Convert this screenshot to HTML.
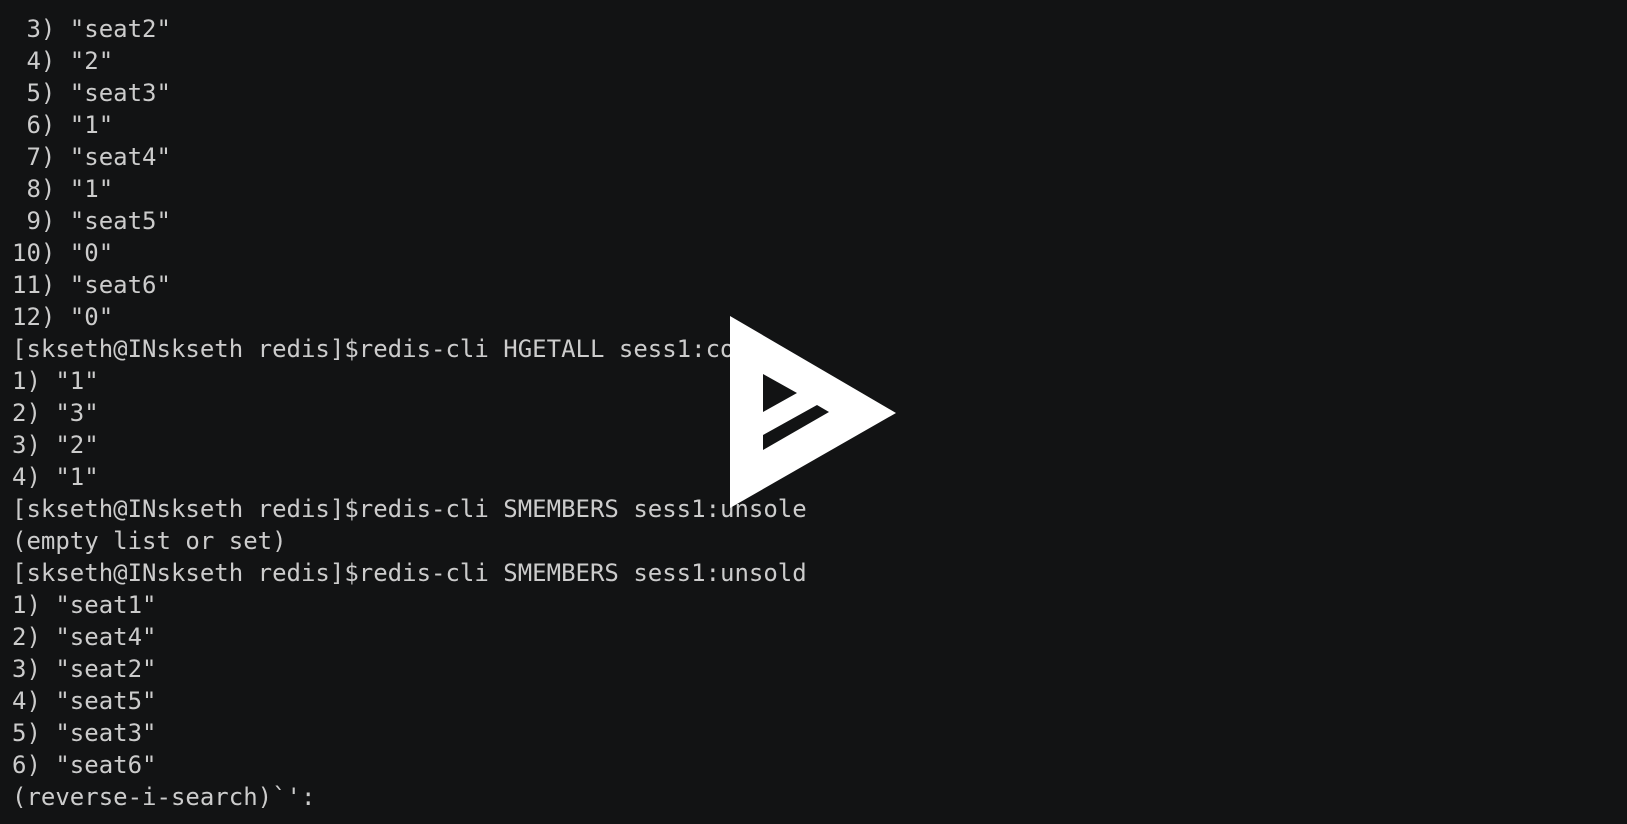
<!DOCTYPE html>
<html><head><meta charset="utf-8"><style>
html,body{margin:0;padding:0;background:#121314;width:1627px;height:824px;overflow:hidden}
pre{position:absolute;left:12px;top:13px;margin:0;font-family:"DejaVu Sans Mono","Liberation Mono",monospace;font-size:24px;line-height:32px;color:#cccccc}
svg{position:absolute;left:0;top:0}
</style></head><body>
<pre> 3) "seat2"
 4) "2"
 5) "seat3"
 6) "1"
 7) "seat4"
 8) "1"
 9) "seat5"
10) "0"
11) "seat6"
12) "0"
[skseth@INskseth redis]$redis-cli HGETALL sess1:co
1) "1"
2) "3"
3) "2"
4) "1"
[skseth@INskseth redis]$redis-cli SMEMBERS sess1:unsole
(empty list or set)
[skseth@INskseth redis]$redis-cli SMEMBERS sess1:unsold
1) "seat1"
2) "seat4"
3) "seat2"
4) "seat5"
5) "seat3"
6) "seat6"
(reverse-i-search)`':</pre>
<svg width="1627" height="824">
<polygon points="730,316 896,413 730,508" fill="#fff"/>
<polygon points="763,374 797,393 763,412" fill="#121314"/>
<polygon points="763,435 817,405 829,412 763,450" fill="#121314"/>
</svg>
</body></html>
